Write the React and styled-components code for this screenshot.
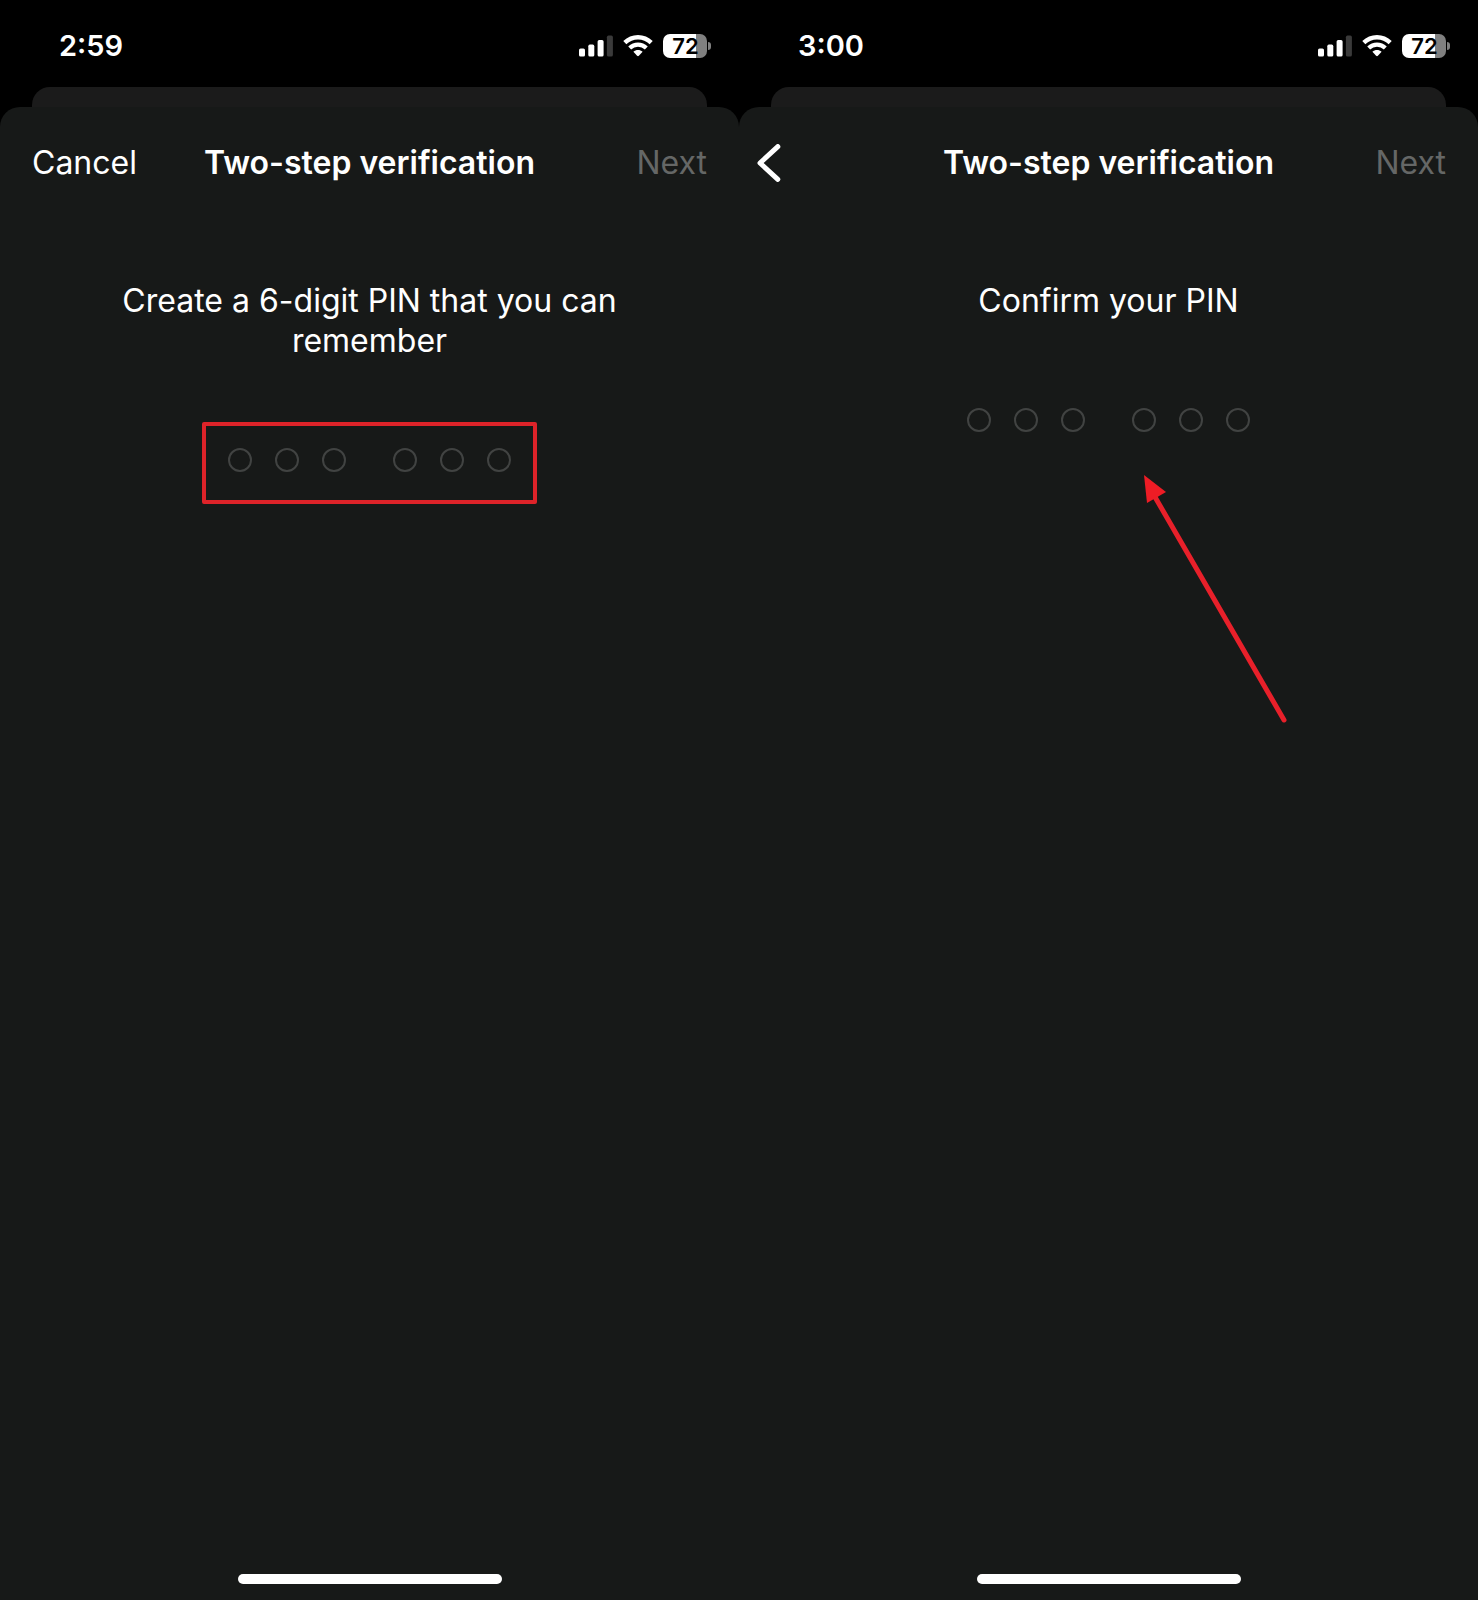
import React from 'react'
import styled, { createGlobalStyle } from 'styled-components'

const GlobalStyle = createGlobalStyle`
* {
    box-sizing: border-box;
}
body {
    margin: 0;
    background-color: #000;
    color: #fff;
    font-family: Inter, "Liberation Sans", sans-serif;
}
button, input {
    font-family: inherit;
}
`

function SignalIcon() {
    return (
        <svg width="34" height="22" viewBox="0 0 34 22" fill="#fff" aria-hidden="true">
            <rect x="0" y="13.6" width="6" height="8" rx="1.6" />
            <rect x="9.3" y="9.6" width="6" height="12" rx="1.6" />
            <rect x="18.6" y="5.1" width="6" height="16.5" rx="1.6" />
            <rect x="27.9" y="0.6" width="6" height="21" rx="1.6" fill="#3a3a3a" />
        </svg>
    )
}

function WifiIcon() {
    return (
        <svg width="30" height="22" viewBox="0 0 30 22" fill="none" stroke="#fff" aria-hidden="true">
            <path d="M1.8 7.6C9.2 0.4 20.8 0.4 28.2 7.6" strokeWidth="4.4" />
            <path d="M6.7 12.9C11.4 8.4 18.6 8.4 23.3 12.9" strokeWidth="4.2" />
            <path d="M10.4 16.8C12.9 14.4 17.1 14.4 19.6 16.8L15.9 20.7Q15 21.6 14.1 20.7Z" fill="#fff" stroke="none" />
        </svg>
    )
}

function BackIcon() {
    return (
        <svg width="24" height="38" viewBox="0 0 24 38" fill="none" stroke="#fff" strokeWidth="5" strokeLinecap="round" strokeLinejoin="round" aria-hidden="true">
            <path d="M20.8 2.6L3 19L20.8 35.4" />
        </svg>
    )
}

function PinInput({ label }) {
    return (
        <Pins role="group" aria-label={label}>
            {[1, 2, 3, 4, 5, 6].map(n => (
                <Digit key={n} type="password" inputMode="numeric" maxLength={1} aria-label={`Digit ${n}`} />
            ))}
        </Pins>
    )
}

function Screen({ time, left, prompt, children }) {
    return (
        <Phone>
            <StatusBar>
                <Time>{time}</Time>
                <StatusIcons>
                    <SignalIcon />
                    <WifiIcon />
                    <Battery>
                        <Level>72</Level>
                        <Nub />
                    </Battery>
                </StatusIcons>
            </StatusBar>
            <BackCard />
            <Sheet>
                <Nav>
                    {left}
                    <Title>Two-step verification</Title>
                    <NextButton type="button" disabled>Next</NextButton>
                </Nav>
                <Prompt>{prompt}</Prompt>
                <PinArea>{children}</PinArea>
                <HomeBar />
            </Sheet>
        </Phone>
    )
}

function App() {
    return (
        <>
        <GlobalStyle />
        <Page>
            <Screen
                time="2:59"
                prompt="Create a 6-digit PIN that you can remember"
                left={<NavButton type="button">Cancel</NavButton>}
            >
                <PinInput label="Create PIN" />
                <Highlight />
            </Screen>
            <Screen
                time="3:00"
                prompt="Confirm your PIN"
                left={<BackButton type="button" aria-label="Back"><BackIcon /></BackButton>}
            >
                <PinInput label="Confirm PIN" />
                <Arrow viewBox="0 0 152 256" aria-hidden="true">
                    <path d="M15 25L144 248" stroke="#e8202a" strokeWidth="5" strokeLinecap="round" />
                    <path d="M4 3L26 20L7 31Z" fill="#ee1c25" />
                </Arrow>
            </Screen>
        </Page>
        </>
    )
}

export default App

const Page = styled.main`
display: grid;
grid-template-columns: 1fr 1fr;
min-height: 100vh;
`
const Phone = styled.section`
display: flex;
flex-direction: column;
min-width: 0;
`
const StatusBar = styled.div`
display: flex;
align-items: center;
justify-content: space-between;
height: 87px;
padding: 4px 28px 0 59px;
`
const Time = styled.span`
font-size: 29px;
line-height: 36px;
font-weight: 600;
`
const StatusIcons = styled.div`
display: flex;
align-items: center;
gap: 10px;
`
const Battery = styled.div`
display: flex;
align-items: center;
gap: 1px;
`
const Level = styled.span`
width: 44px;
height: 24px;
padding-left: 1px;
border-radius: 7px;
background: linear-gradient(90deg, #fff 74%, #808080 74%);
color: #000;
font-size: 22px;
line-height: 24px;
font-weight: 600;
text-align: center;
`
const Nub = styled.span`
width: 3px;
height: 8px;
border-radius: 0 3px 3px 0;
background-color: #808080;
`
const BackCard = styled.div`
height: 20px;
margin: 0 32px;
border-radius: 18px 18px 0 0;
background-color: #1b1b1b;
`
const Sheet = styled.div`
flex: 1;
display: flex;
flex-direction: column;
align-items: center;
padding-bottom: 16px;
border-radius: 20px 20px 0 0;
background-color: #171918;
`
const Nav = styled.header`
width: 100%;
height: 112px;
display: grid;
grid-template-columns: 1fr auto 1fr;
align-items: center;
padding: 0 32px;
`
const NavButton = styled.button`
justify-self: start;
padding: 0;
border: none;
background: none;
color: #fff;
font-size: 32px;
line-height: 40px;
`
const BackButton = styled(NavButton)`
display: flex;
margin-left: -14px;
`
const NextButton = styled(NavButton)`
justify-self: end;
color: #656766;
`
const Title = styled.h1`
margin: 0;
font-size: 32px;
line-height: 40px;
font-weight: 600;
`
const Prompt = styled.p`
max-width: 540px;
margin: 62px 0 87px;
font-size: 32px;
line-height: 40px;
text-align: center;
`
const PinArea = styled.div`
position: relative;
`
const Pins = styled.div`
display: flex;
gap: 23px;
`
const Digit = styled.input`
width: 24px;
height: 24px;
margin: 0;
padding: 0;
border: 2px solid #414342;
border-radius: 50%;
background: none;
color: #fff;
text-align: center;
outline: none;

&:nth-child(4) {
    margin-left: 24px;
}
`
// marker frame around the PIN dots
const Highlight = styled.div`
position: absolute;
inset: -26px -26px -32px;
border: 4px solid #de2329;
border-radius: 2px;
pointer-events: none;
`
const Arrow = styled.svg`
position: absolute;
top: calc(100% + 40px);
left: calc(50% + 31px);
width: 152px;
height: 256px;
fill: none;
pointer-events: none;
`
const HomeBar = styled.div`
width: 264px;
height: 10px;
margin-top: auto;
border-radius: 5px;
background-color: #fff;
`
